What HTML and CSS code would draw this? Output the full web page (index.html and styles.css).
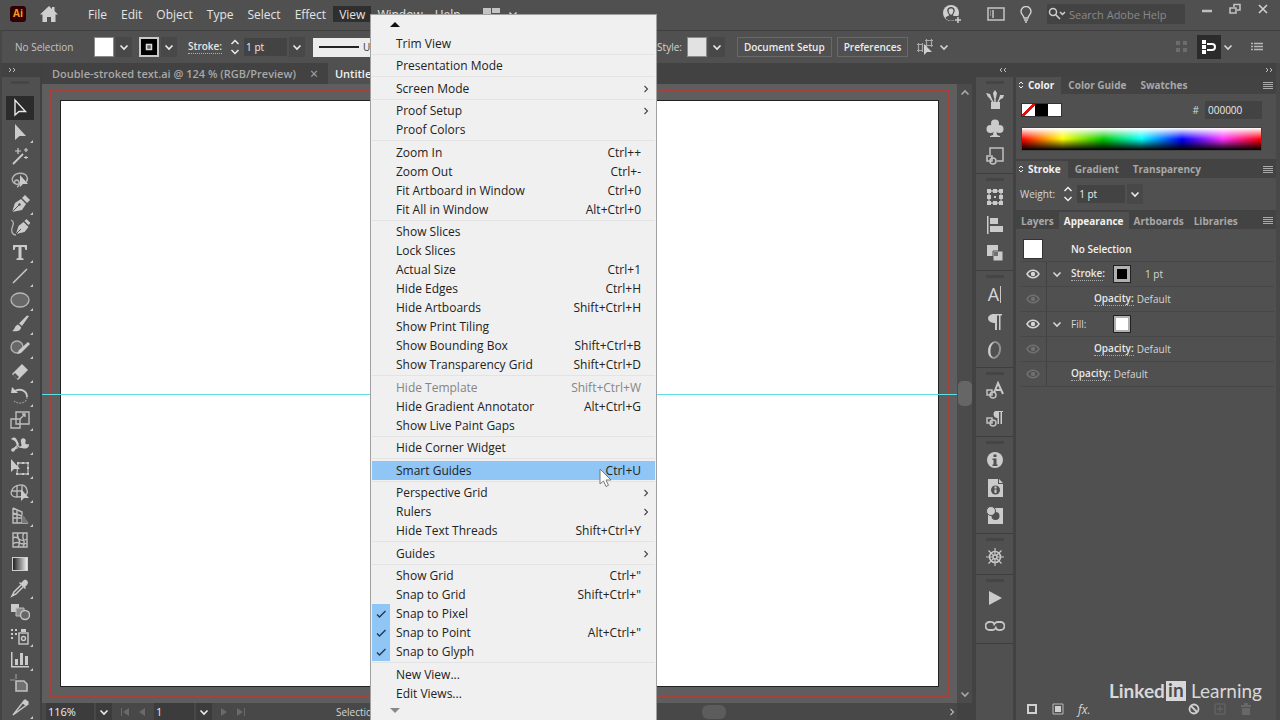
FILE: index.html
```html
<!DOCTYPE html>
<html lang="en">
  <head>
    <meta charset="UTF-8" />
    <meta name="viewport" content="width=device-width, initial-scale=1.0" />
    <title>Adobe Illustrator</title>
    <link rel="stylesheet" href="styles.css">
  </head>
  <body>
    <svg class="defs" aria-hidden="true">
      <symbol id="chevron" viewBox="0 0 10 10"><path d="M1.5 3.5 5 7l3.5-3.5" fill="none" stroke="currentColor" stroke-width="1.6" /></symbol>
      <symbol id="arrow-right" viewBox="0 0 10 10"><path d="M3.5 2 6.500 5 3.500 8" fill="none" stroke="currentColor" stroke-width="1.1" /></symbol>
      <symbol id="stepper" viewBox="0 0 10 16"><path d="M1.500 5 5 1.500 8.500 5M1.500 11 5 14.500 8.500 11" fill="none" stroke="currentColor" stroke-width="1.500" /></symbol>
      <symbol id="sort" viewBox="0 0 6 8"><path d="M1 3 3 1l2 2M1 5l2 2 2-2" fill="none" stroke="currentColor" stroke-width="1" /></symbol>
      <symbol id="lines" viewBox="0 0 10 8"><path d="M0 .5h10M0 2.5h10M0 4.5h10M0 6.5h10" stroke="currentColor" stroke-width="1" /></symbol>
      <symbol id="eye" viewBox="0 0 14 10"><path d="M1 5c3-5 9-5 12 0-3 5-9 5-12 0z" fill="none" stroke="currentColor" stroke-width="1.500" /><circle cx="7" cy="5" r="2.200" fill="currentColor" /></symbol>
      <symbol id="check" viewBox="0 0 12 12"><path d="M2 6.500 4.500 9 10.500 3" fill="none" stroke="currentColor" stroke-width="1.400" /></symbol>
      <symbol id="double" viewBox="0 0 8 6"><path d="M1 1l2 2-2 2M5 1l2 2-2 2" fill="none" stroke="currentColor" stroke-width="1" /></symbol>
    </svg>

    <div class="app">
      <header class="menubar">
        <span class="logo">Ai</span>
        <button class="home" aria-label="Home">
          <svg width="18" height="17" viewBox="0 0 18 17"><path d="M9 0 0 8.500h2.500V16h4.500v-5h4v5h4.500V8.500H18L14.500 5V1h-2.500v2z" fill="#cfcfcf" /></svg>
        </button>
        <nav class="menus">
          <button>File</button>
          <button>Edit</button>
          <button>Object</button>
          <button>Type</button>
          <button>Select</button>
          <button>Effect</button>
          <button class="open">View</button>
          <button>Window</button>
          <button>Help</button>
        </nav>
        <button class="arrange" aria-label="Arrange documents">
          <svg width="17" height="12" viewBox="0 0 17 12"><path d="M0 0h8v12H0zM9 0h8v5H9zM9 6h8v6H9z" fill="#c4c4c4" /></svg>
          <svg width="10" height="10"><use href="#chevron" /></svg>
        </button>
        <div class="menubar-right">
          <button aria-label="Account">
            <svg width="20" height="20" viewBox="0 0 20 20"><circle cx="9" cy="9" r="8" fill="#d0d0d0" /><path d="M9 3c3 0 4.500 2.500 3.500 5l-1.500 3c0 1.500 3 1 3.500 3-3 3.500-8 3.500-11 0C4 12 7 12.500 7 11L5.500 8C4.500 5.500 6 3 9 3z" fill="#505050" /><path d="M9 4.500c2 0 2.800 1.600 2.200 3.400L10 10.500h-2L6.800 7.900C6.200 6.100 7 4.500 9 4.500z" fill="#d0d0d0" /><path d="M12 12h8v8h-8z" fill="#505050" /><path d="M16 13v6M13 16h6" stroke="#d0d0d0" stroke-width="1.500" /></svg>
          </button>
          <button aria-label="Workspace">
            <svg width="18" height="14" viewBox="0 0 18 14"><path d="M1 1h16v12H1zM6 3v8" fill="none" stroke="#c4c4c4" stroke-width="1.500" /><path d="M3 4h1M3 6h1M3 8h1" stroke="#c4c4c4" stroke-width="1.200" /></svg>
          </button>
          <button aria-label="Learn">
            <svg width="12" height="17" viewBox="0 0 12 17"><path d="M4 12c0-2.500-3-3.500-3-6.500a5 5 0 0 1 10 0c0 3-3 4-3 6.500z" fill="none" stroke="#d0d0d0" stroke-width="1.400" /><path d="M4 14h4M5 16h2" stroke="#d0d0d0" stroke-width="1.300" /></svg>
          </button>
          <label class="search">
            <svg width="20" height="14" viewBox="0 0 20 14"><circle cx="6" cy="5" r="3.500" fill="none" stroke="#d0d0d0" stroke-width="1.500" /><path d="M8.500 7.500 13 12M13 5l2.500 2.500L18 5" fill="none" stroke="#d0d0d0" stroke-width="1.500" /></svg>
            <input type="text" placeholder="Search Adobe Help" aria-label="Search Adobe Help">
          </label>
          <div class="window-buttons">
            <button aria-label="Minimize"><svg width="12" height="12" viewBox="0 0 12 12"><path d="M1 8h10" stroke="#c0c0c0" stroke-width="2.500" /></svg></button>
            <button aria-label="Restore"><svg width="12" height="12" viewBox="0 0 12 12"><path d="M5 4V1.500h6V7H8M1 5h6v5H1z" fill="none" stroke="#c0c0c0" stroke-width="1.600" /></svg></button>
            <button aria-label="Close"><svg width="12" height="12" viewBox="0 0 12 12"><path d="M2 2l8 8M10 2l-8 8" stroke="#d0d0d0" stroke-width="1.600" /></svg></button>
          </div>
        </div>
      </header>

      <section class="control-bar">
        <span class="selection-label">No Selection</span>
        <div class="picker">
          <button class="swatch white" aria-label="Fill color"></button>
          <button class="drop" aria-label="Fill options"><svg width="10" height="10"><use href="#chevron" /></svg></button>
        </div>
        <div class="picker">
          <button class="swatch stroke" aria-label="Stroke color"><svg width="16" height="16" viewBox="0 0 16 16"><path d="M0 0h16v16H0z" fill="#000" /><path d="M5.500 5.500h5v5h-5z" fill="#666" stroke="#ddd" stroke-width="1.500" /></svg></button>
          <button class="drop" aria-label="Stroke options"><svg width="10" height="10"><use href="#chevron" /></svg></button>
        </div>
        <label class="stroke-label" for="stroke-weight">Stroke:</label>
        <div class="combo">
          <svg width="10" height="16"><use href="#stepper" /></svg>
          <input id="stroke-weight" type="text" value="1 pt">
          <button class="drop" aria-label="Stroke weight presets"><svg width="10" height="10"><use href="#chevron" /></svg></button>
        </div>
        <button class="profile"><span class="profile-line"></span>Uniform</button>
        <div class="picker style-picker">
          <span>Style:</span>
          <button class="swatch light" aria-label="Graphic style"></button>
          <button class="drop" aria-label="Graphic styles"><svg width="10" height="10"><use href="#chevron" /></svg></button>
        </div>
        <button class="text-button">Document Setup</button>
        <button class="text-button">Preferences</button>
        <button class="select-similar" aria-label="Select similar objects">
          <svg width="16" height="16" viewBox="0 0 16 16"><path d="M8 1.500h8M8 6.500h8M9.500 0v8M14.500 0v8M0 5.500h6M0 11.500h6M1.500 4v9M5.500 4v9" stroke="#a8a8a8" stroke-width="1.200" /><path d="M7 5v11l3-3h5z" fill="#d0d0d0" /></svg>
          <svg width="10" height="10"><use href="#chevron" /></svg>
        </button>
        <div class="control-right">
          <svg width="12" height="12" viewBox="0 0 12 12"><path d="M0 0h4v4H0zM7 0h4v4H7zM0 7h4v4H0zM7 7h4v4H7z" fill="#6c6c6c" /></svg>
          <button class="snap" aria-label="Snap options">
            <svg width="16" height="16" viewBox="0 0 16 16"><path d="M1 1h4v4H1zM1 6h4v4H1zM1 11h4v4H1z" fill="#fff" /><path d="M6 5h5a3 3 0 0 1 0 6H6" fill="none" stroke="#fff" stroke-width="2" /></svg>
          </button>
          <button class="snap-more" aria-label="More snap options"><svg width="10" height="10"><use href="#chevron" /></svg></button>
          <button class="bar-menu" aria-label="Control bar menu">
            <svg width="12" height="10" viewBox="0 0 12 10"><path d="M0 1.500h2M0 4.500h2M0 7.500h2M3 1.500h9M3 4.500h9M3 7.500h9" stroke="#b8b8b8" stroke-width="1.400" /></svg>
          </button>
        </div>
      </section>

      <main class="workspace">
        <aside class="tools">
          <div class="strip"><svg width="8" height="6"><use href="#double" /></svg></div>
          <div class="tools-grip"></div>
          <div class="tool-list">
            <button class="tool active" aria-label="Selection"><svg viewBox="0 0 20 20"><path d="M5 2v15l4-3.500h6.500z" fill="none" stroke="#e8e8e8" stroke-width="1.400" /></svg></button>
            <button class="tool more" aria-label="Direct selection"><svg viewBox="0 0 20 20"><path d="M5 2v16l4.500-4H16z" /></svg></button>
            <button class="tool" aria-label="Magic wand"><svg viewBox="0 0 20 20"><path d="M3 18 13 8" stroke="#cbcbcb" stroke-width="1.800" /><path d="M8 2v6M5 5h6M16 2v4M14 4h4M16 10v3M14 11.500h4" stroke="#cbcbcb" stroke-width="1.200" /></svg></button>
            <button class="tool" aria-label="Lasso"><svg viewBox="0 0 20 20"><path d="M6 14c-3-1-5-4-3-7 3-5 12-5 14 0 1 2 0 4-1 5M7 17c3-1 3-6 0-7-3 0-3 3-1 4 3 1 6-2 6-5" fill="none" stroke="#b5b5b5" stroke-width="1.400" /><path d="M10 5v12l3-3h5z" /></svg></button>
            <button class="tool more" aria-label="Pen"><svg viewBox="0 0 20 20"><path d="M2 18 5 9l6-4 5 5-4 6z" /><path d="M12 4l3-3 5 5-3 3z" /><path d="M2 18l7-7" stroke="#505050" /><circle cx="9.500" cy="10.500" r="1.200" fill="#505050" /></svg></button>
            <button class="tool" aria-label="Curvature"><svg viewBox="0 0 20 20"><path d="M6 16 8.500 8l5-4 5 5-4 5zM14.500 3l2-2 4 4-2 2z" /><path d="M6 16l5-5" stroke="#505050" /><path d="M1 2c4 2 2 5 1 8s0 7 4 7" fill="none" stroke="#b5b5b5" stroke-width="1.300" /></svg></button>
            <button class="tool more" aria-label="Type"><svg viewBox="0 0 20 20"><path d="M3 3h14v5h-1.500l-1-3H11.500v11l2 .500V18h-7v-1.500l2-.500V5H5.500l-1 3H3z" /></svg></button>
            <button class="tool more" aria-label="Line segment"><svg viewBox="0 0 20 20"><path d="M3 17 17 3" stroke="#cbcbcb" stroke-width="1.400" /></svg></button>
            <button class="tool more" aria-label="Ellipse"><svg viewBox="0 0 20 20"><ellipse cx="10" cy="10" rx="9" ry="7" fill="#686868" stroke="#b8b8b8" stroke-width="1.300" /></svg></button>
            <button class="tool more" aria-label="Paintbrush"><svg viewBox="0 0 20 20"><path d="M19 2 12 12l-3-2.500 8-8zM8 10.500l3 2.500c0 4-4 5-9 4 3-1 2-5 6-6.500z" /></svg></button>
            <button class="tool more" aria-label="Shaper"><svg viewBox="0 0 20 20"><circle cx="7" cy="9" r="6" fill="#686868" stroke="#b0b0b0" stroke-width="1.400" /><path d="M7 16 9 12l9-8 2 2-9 9z" /></svg></button>
            <button class="tool more" aria-label="Eraser"><svg viewBox="0 0 20 20"><path d="M12 2l6 6-10 10-6-6z" /><path d="M5 11l4 4-2 2-4-4z" fill="#505050" /></svg></button>
            <button class="tool more" aria-label="Rotate"><svg viewBox="0 0 20 20"><path d="M5 5c6-3 12 0 12 6" fill="none" stroke="#c8c8c8" stroke-width="1.800" /><path d="M17 11c0 6-8 8-13 4" fill="none" stroke="#909090" stroke-width="1.300" stroke-dasharray="2 1" /><path d="M2 1l6 6H1z" /></svg></button>
            <button class="tool more" aria-label="Scale"><svg viewBox="0 0 20 20"><path d="M6 2h13v12H6zM1 9h9v9H1zM10 9l5-5M12 4h3v3" fill="none" stroke="#bdbdbd" stroke-width="1.400" /></svg></button>
            <button class="tool more" aria-label="Width"><svg viewBox="0 0 20 20"><path d="M1 5c4-3 5-1 7 3 2 5 4 5 3 0-1-3 2-5 4-3s-1 4 1 5 3 0 3 0c0 5-4 5-7 4-3 0-5-1-6-5C5 6 4 7 1 5z" /><path d="M2 16c3 1 3-3 6-2M2 16l6-5" fill="none" stroke="#c8c8c8" stroke-width="1.300" /><circle cx="3" cy="16" r="1.800" /><circle cx="10" cy="11" r="1.500" fill="#505050" /></svg></button>
            <button class="tool more" aria-label="Free transform"><svg viewBox="0 0 20 20"><path d="M8 5h10v11H7z" fill="none" stroke="#b8b8b8" stroke-width="1.300" /><path d="M7 4h2v2H7zM12 4h2v2h-2zM17 4h2v2h-2zM17 9h2v2h-2zM17 15h2v2h-2zM12 15h2v2h-2zM6 15h2v2H6zM1 1v13l3-3h6z" /></svg></button>
            <button class="tool more" aria-label="Shape builder"><svg viewBox="0 0 20 20"><path d="M6 15C2 15 0 12 2 8c2-5 13-8 15 0 2 6-5 7-11 7zM2 9h10M7 4v11M12 4v6" fill="none" stroke="#b8b8b8" stroke-width="1.400" /><path d="M11 7v12l3-3h5z" /></svg></button>
            <button class="tool more" aria-label="Perspective grid"><svg viewBox="0 0 20 20"><path d="M3 2v15h15M3 2l9 4v11M3 7l9 3M3 12h12M7 4v13" fill="none" stroke="#bdbdbd" stroke-width="1.400" /><path d="M12 8l7 9h-7z" fill="#777" /></svg></button>
            <button class="tool" aria-label="Mesh"><svg viewBox="0 0 20 20"><path d="M3 3h14v14H3zM3 8c5-4 6 6 14 1M3 14c5-5 8 3 14-1M8 3c-3 5 5 7 0 14M14 3c-4 5 3 8-1 14" fill="none" stroke="#bdbdbd" stroke-width="1.400" /></svg></button>
            <button class="tool" aria-label="Gradient"><span class="gradient-icon"></span></button>
            <button class="tool more" aria-label="Eyedropper"><svg viewBox="0 0 20 20"><path d="M13 3c2-3 7 0 4 4l-2 2 1 1-1 1-6-6 1-1 1 1z" /><path d="M11 7 4 14l-2 4 4-2 7-7" fill="none" stroke="#cbcbcb" stroke-width="1.500" /></svg></button>
            <button class="tool" aria-label="Blend"><svg viewBox="0 0 20 20"><path d="M1 2h8v8H1z" /><path d="M6 6h8v8H6z" fill="#8a8a8a" stroke="#bdbdbd" /><circle cx="15" cy="13" r="4.500" fill="#666" stroke="#c5c5c5" stroke-width="1.400" /></svg></button>
            <button class="tool more" aria-label="Symbol sprayer"><svg viewBox="0 0 20 20"><path d="M9 7h9v11H9z" fill="none" stroke="#bdbdbd" stroke-width="1.600" /><circle cx="13.500" cy="12.500" r="2" fill="none" stroke="#cbcbcb" stroke-width="1.400" /><path d="M11 3h5v3h-5zM1 3h2v2H1zM5 3h2v2H5zM1 7h2v2H1zM5 7h2v2H5zM1 11h2v2H1z" /></svg></button>
            <button class="tool more" aria-label="Column graph"><svg viewBox="0 0 20 20"><path d="M1 2h1.500v14H19v1.500H1zM5 9h3v6H5zM10 3h3v12h-3zM15 6h3v9h-3z" /></svg></button>
            <button class="tool" aria-label="Artboard"><svg viewBox="0 0 20 20"><path d="M6 0v5M0 6h5" stroke="#999" stroke-width="1.200" /><path d="M6 7h8l3 3v7H6z" fill="#707070" stroke="#c0c0c0" stroke-width="1.600" /></svg></button>
            <button class="tool more" aria-label="Slice"><svg viewBox="0 0 20 20"><path d="M3 17 14 3l4 3z" fill="none" stroke="#c5c5c5" stroke-width="1.500" /><path d="M12 5l3-4 4 3-3 4z" /></svg></button>
          </div>
        </aside>

        <section class="document">
          <div class="tabs">
            <button class="tab">Double-stroked text.ai @ 124 % (RGB/Preview)<span class="close">×</span></button>
            <button class="tab active">Untitled</button>
          </div>
          <div class="view">
            <div class="canvas">
              <div class="bleed"><div class="artboard"></div></div>
              <div class="guide"></div>
            </div>
            <div class="scroll-y">
              <svg width="10" height="10" class="flip"><use href="#chevron" /></svg>
              <span class="thumb-y"></span>
              <svg width="10" height="10"><use href="#chevron" /></svg>
            </div>
          </div>
          <div class="status">
            <div class="combo zoom">
              <input type="text" value="116%" aria-label="Zoom level">
              <button class="drop" aria-label="Zoom presets"><svg width="10" height="10"><use href="#chevron" /></svg></button>
            </div>
            <svg class="nav" width="26" height="10" viewBox="0 0 26 10"><path d="M1 1h1v8H1zM9 1v8L3 5zM25 1v8l-6-4z" fill="#6a6a6a" /></svg>
            <div class="combo page">
              <input type="text" value="1" aria-label="Artboard number">
              <button class="drop" aria-label="Artboards"><svg width="10" height="10"><use href="#chevron" /></svg></button>
            </div>
            <svg class="nav" width="26" height="10" viewBox="0 0 26 10"><path d="M1 1v8l6-4zM17 1v8l6-4zM24 1h1v8h-1z" fill="#6a6a6a" /></svg>
            <span class="tool-name">Selection</span>
            <div class="scroll-x">
              <span class="thumb-x"></span>
              <svg width="10" height="10"><use href="#arrow-right" /></svg>
            </div>
          </div>
        </section>

        <aside class="dock">
          <div class="strip"><svg width="8" height="6" class="flip"><use href="#double" /></svg></div>
          <div class="dock-group">
            <button aria-label="Brushes"><svg viewBox="0 0 20 20"><path d="M6 12h9v7H6z" /><path d="M10 12V5M8 12 4 6M13 12l3-6" stroke="#c8c8c8" stroke-width="1.500" /><path d="M10 0l2 3-1 5H9L8 3zM1 3l4 1 2 5-4-2zM15 5h4l-1 3-4 2z" /></svg></button>
            <button aria-label="Symbols"><svg viewBox="0 0 20 20"><circle cx="10" cy="5.500" r="4" /><circle cx="5.500" cy="11" r="4" /><circle cx="14.500" cy="11" r="4" /><path d="M9 9h2l1 8 3 1v1H5v-1l3-1z" /></svg></button>
            <button aria-label="Graphic styles"><svg viewBox="0 0 20 20"><path d="M5 9V2h13v13h-6" fill="none" stroke="#c0c0c0" stroke-width="1.500" /><path d="M2 10h5v5H2z" fill="none" stroke="#c0c0c0" stroke-width="1.600" /><circle cx="8" cy="15" r="3" fill="none" stroke="#c0c0c0" stroke-width="1.600" /></svg></button>
          </div>
          <div class="dock-group">
            <button aria-label="Transform"><svg viewBox="0 0 20 20"><path d="M4 4h12v12H4z" fill="none" stroke="#bdbdbd" stroke-width="1.300" /><path d="M2 2h4v4H2zM8 2h4v4H8zM14 2h4v4h-4zM2 8h4v4H2zM14 8h4v4h-4zM2 14h4v4H2zM8 14h4v4H8zM14 14h4v4h-4zM9 9h2v2H9z" /></svg></button>
            <button aria-label="Align"><svg viewBox="0 0 20 20"><path d="M2 1h1.500v18H2zM5 3h8v6H5zM5 11h13v6H5z" /></svg></button>
            <button aria-label="Pathfinder"><svg viewBox="0 0 20 20"><path d="M2 2h11v11H2z" /><path d="M8 8h10v10H8z" stroke="#505050" /><path d="M9 9h4v4H9z" fill="#707070" /></svg></button>
          </div>
          <div class="dock-group">
            <button aria-label="Character" class="glyph">A<span class="caret"></span></button>
            <button aria-label="Paragraph"><svg viewBox="0 0 20 20"><path d="M9 2h8v1.500h-1.500V18H14V3.500h-2V18h-2v-7C1 11 1 2 9 2z" /></svg></button>
            <button aria-label="OpenType"><svg viewBox="0 0 20 20"><ellipse cx="9.500" cy="10" rx="5.500" ry="8" transform="rotate(12 9.500 10)" fill="none" stroke="#909090" stroke-width="2" /><path d="M9 2C2 3 1 17 8 18c-4-3-3-13 1-16z" /></svg></button>
          </div>
          <div class="dock-group">
            <button aria-label="Character styles"><svg viewBox="0 0 20 20"><path d="M2 9h5v5H2z" fill="none" stroke="#c0c0c0" stroke-width="1.500" /><circle cx="8" cy="14" r="3" fill="none" stroke="#c0c0c0" stroke-width="1.500" /><path d="m9 12 4-10 5 11M11 9h5" fill="none" stroke="#c8c8c8" stroke-width="2" /></svg></button>
            <button aria-label="Paragraph styles"><svg viewBox="0 0 20 20"><path d="M2 9h5v5H2z" fill="none" stroke="#c0c0c0" stroke-width="1.500" /><circle cx="8" cy="14" r="3" fill="none" stroke="#c0c0c0" stroke-width="1.500" /><path d="M11 2h7v1h-1v12h-1.500V3h-1.500v12h-1.500V9c-5 0-5-7-1.500-7z" /></svg></button>
          </div>
          <div class="dock-group">
            <button aria-label="Info"><svg viewBox="0 0 20 20"><circle cx="10" cy="10" r="8" /><path d="M8.500 4.500h3v2.500h-3zM7.500 8.500h4v6h1V16h-5v-1.500h1V10h-1z" fill="#505050" /></svg></button>
            <button aria-label="Document info"><svg viewBox="0 0 20 20"><path d="M3 1h10v5h5v13H3z" /><path d="M14 1l4 4h-4z" /><circle cx="10.500" cy="12" r="4.500" fill="#505050" /><path d="M9.500 8.500h2v2h-2zM9.500 11.500h2V15h-2z" /></svg></button>
            <button aria-label="Attributes"><svg viewBox="0 0 20 20"><path d="M10 2h8v16H3V9z" /><circle cx="10.500" cy="10" r="4" fill="#505050" /><circle cx="6" cy="5" r="4.500" stroke="#505050" /></svg></button>
          </div>
          <div class="dock-group">
            <button aria-label="Navigator"><svg viewBox="0 0 20 20"><circle cx="10" cy="10" r="5.500" fill="none" stroke="#c8c8c8" stroke-width="1.600" /><circle cx="10" cy="10" r="2" fill="none" stroke="#c8c8c8" stroke-width="1.500" /><path d="M10 1v7M10 12v7M1 10h7M12 10h7M3.500 3.500l5 5M11.500 11.500l5 5M16.500 3.500l-5 5M8.500 11.500l-5 5" stroke="#c8c8c8" stroke-width="1.200" /></svg></button>
          </div>
          <div class="dock-group">
            <button aria-label="Actions"><svg viewBox="0 0 20 20"><path d="M4 3v14l13-7z" /></svg></button>
            <button aria-label="Links"><svg viewBox="0 0 20 20"><path d="M9 7.500C8 5.500 6 6 4.500 6a4 4 0 0 0 0 8H7c2 0 4-1.500 4-3.500M11 12.500c1 2 3 1.500 4.500 1.500a4 4 0 0 0 0-8H13c-2 0-4 1.500-4 3.500" fill="none" stroke="#c8c8c8" stroke-width="1.800" /></svg></button>
          </div>
          <div class="dock-rest"></div>
        </aside>

        <aside class="panels">
          <div class="strip"><svg width="8" height="6"><use href="#double" /></svg></div>

          <div class="panel-tabs">
            <button class="active"><svg width="6" height="8"><use href="#sort" /></svg>Color</button>
            <button>Color Guide</button>
            <button>Swatches</button>
            <svg class="flyout" width="10" height="8"><use href="#lines" /></svg>
          </div>
          <div class="panel color-panel">
            <div class="color-row">
              <div class="chips"><span class="none"></span><span class="black"></span><span class="chip-white"></span></div>
              <label for="hex">#</label>
              <input id="hex" type="text" value="000000">
            </div>
            <div class="spectrum"></div>
          </div>

          <div class="panel-tabs">
            <button class="active"><svg width="6" height="8"><use href="#sort" /></svg>Stroke</button>
            <button>Gradient</button>
            <button>Transparency</button>
            <svg class="flyout" width="10" height="8"><use href="#lines" /></svg>
          </div>
          <div class="panel stroke-panel">
            <label for="weight">Weight:</label>
            <div class="combo">
              <svg width="10" height="16"><use href="#stepper" /></svg>
              <input id="weight" type="text" value="1 pt">
              <button class="drop" aria-label="Weight presets"><svg width="10" height="10"><use href="#chevron" /></svg></button>
            </div>
          </div>

          <div class="panel-tabs compact">
            <button>Layers</button>
            <button class="active">Appearance</button>
            <button>Artboards</button>
            <button>Libraries</button>
            <svg class="flyout" width="10" height="8"><use href="#lines" /></svg>
          </div>
          <div class="panel appearance">
            <ul class="attributes">
              <li class="title-row"><span class="thumb"></span><b>No Selection</b></li>
              <li><span class="eye"><svg width="14" height="10"><use href="#eye" /></svg></span><svg class="expand" width="10" height="10"><use href="#chevron" /></svg><a href="#">Stroke:</a><span class="mini dark"></span><span>1 pt</span></li>
              <li class="nested"><span class="eye off"><svg width="14" height="10"><use href="#eye" /></svg></span><a href="#">Opacity:</a><span>Default</span></li>
              <li><span class="eye"><svg width="14" height="10"><use href="#eye" /></svg></span><svg class="expand" width="10" height="10"><use href="#chevron" /></svg><span class="name">Fill:</span><span class="mini"></span></li>
              <li class="nested"><span class="eye off"><svg width="14" height="10"><use href="#eye" /></svg></span><a href="#">Opacity:</a><span>Default</span></li>
              <li class="nested top"><span class="eye off"><svg width="14" height="10"><use href="#eye" /></svg></span><a href="#">Opacity:</a><span>Default</span></li>
            </ul>
            <div class="panel-footer">
              <button aria-label="Add new stroke"><svg width="12" height="12" viewBox="0 0 12 12"><path d="M2 2h8v8H2z" fill="none" stroke="#d0d0d0" stroke-width="2" /></svg></button>
              <button aria-label="Add new fill"><svg width="12" height="12" viewBox="0 0 12 12"><path d="M1 1h10v10H1z" fill="none" stroke="#b8b8b8" /><path d="M3 3h6v6H3z" fill="#d0d0d0" /></svg></button>
              <button class="fx" aria-label="Add new effect">fx.</button>
              <button class="clear" aria-label="Clear appearance"><svg width="12" height="12" viewBox="0 0 12 12"><circle cx="6" cy="6" r="4.500" fill="none" stroke="#d0d0d0" stroke-width="1.800" /><path d="M3 3l6 6" stroke="#d0d0d0" stroke-width="1.800" /></svg></button>
              <button aria-label="Duplicate item" disabled><svg width="12" height="12" viewBox="0 0 12 12"><path d="M1 1h10v10H1zM6 3v6M3 6h6" fill="none" stroke="#686868" /></svg></button>
              <button aria-label="Delete item" disabled><svg width="12" height="12" viewBox="0 0 12 12"><path d="M1 2h10v2H1zM2 5h8v7H2zM4 0h4v2H4z" fill="#686868" /></svg></button>
            </div>
          </div>
        </aside>
      </main>

      <div class="view-menu" role="menu">
        <span class="scroll-up"></span>
        <ul>
          <li><button role="menuitem">Trim View</button></li>
        </ul>
        <ul>
          <li><button role="menuitem">Presentation Mode</button></li>
        </ul>
        <ul>
          <li><button role="menuitem">Screen Mode<svg width="10" height="10"><use href="#arrow-right" /></svg></button></li>
        </ul>
        <ul>
          <li><button role="menuitem">Proof Setup<svg width="10" height="10"><use href="#arrow-right" /></svg></button></li>
          <li><button role="menuitem">Proof Colors</button></li>
        </ul>
        <ul>
          <li><button role="menuitem">Zoom In<kbd>Ctrl++</kbd></button></li>
          <li><button role="menuitem">Zoom Out<kbd>Ctrl+-</kbd></button></li>
          <li><button role="menuitem">Fit Artboard in Window<kbd>Ctrl+0</kbd></button></li>
          <li><button role="menuitem">Fit All in Window<kbd>Alt+Ctrl+0</kbd></button></li>
        </ul>
        <ul>
          <li><button role="menuitem">Show Slices</button></li>
          <li><button role="menuitem">Lock Slices</button></li>
          <li><button role="menuitem">Actual Size<kbd>Ctrl+1</kbd></button></li>
          <li><button role="menuitem">Hide Edges<kbd>Ctrl+H</kbd></button></li>
          <li><button role="menuitem">Hide Artboards<kbd>Shift+Ctrl+H</kbd></button></li>
          <li><button role="menuitem">Show Print Tiling</button></li>
          <li><button role="menuitem">Show Bounding Box<kbd>Shift+Ctrl+B</kbd></button></li>
          <li><button role="menuitem">Show Transparency Grid<kbd>Shift+Ctrl+D</kbd></button></li>
        </ul>
        <ul>
          <li><button role="menuitem" disabled>Hide Template<kbd>Shift+Ctrl+W</kbd></button></li>
          <li><button role="menuitem">Hide Gradient Annotator<kbd>Alt+Ctrl+G</kbd></button></li>
          <li><button role="menuitem">Show Live Paint Gaps</button></li>
        </ul>
        <ul>
          <li><button role="menuitem">Hide Corner Widget</button></li>
        </ul>
        <ul>
          <li><button role="menuitem" class="hover">Smart Guides<kbd>Ctrl+U</kbd></button></li>
        </ul>
        <ul>
          <li><button role="menuitem">Perspective Grid<svg width="10" height="10"><use href="#arrow-right" /></svg></button></li>
          <li><button role="menuitem">Rulers<svg width="10" height="10"><use href="#arrow-right" /></svg></button></li>
          <li><button role="menuitem">Hide Text Threads<kbd>Shift+Ctrl+Y</kbd></button></li>
        </ul>
        <ul>
          <li><button role="menuitem">Guides<svg width="10" height="10"><use href="#arrow-right" /></svg></button></li>
        </ul>
        <ul>
          <li><button role="menuitem">Show Grid<kbd>Ctrl+"</kbd></button></li>
          <li><button role="menuitem">Snap to Grid<kbd>Shift+Ctrl+"</kbd></button></li>
          <li class="checked"><span class="tick"><svg width="12" height="12"><use href="#check" /></svg></span><button role="menuitem">Snap to Pixel</button></li>
          <li class="checked"><span class="tick"><svg width="12" height="12"><use href="#check" /></svg></span><button role="menuitem">Snap to Point<kbd>Alt+Ctrl+"</kbd></button></li>
          <li class="checked"><span class="tick"><svg width="12" height="12"><use href="#check" /></svg></span><button role="menuitem">Snap to Glyph</button></li>
        </ul>
        <ul>
          <li><button role="menuitem">New View...</button></li>
          <li><button role="menuitem">Edit Views...</button></li>
        </ul>
        <span class="scroll-down"></span>
      </div>

      <svg class="cursor" width="14" height="20" viewBox="0 0 14 20"><path d="M1 1v15l3.500-3 2.500 5.500 2.500-1.200L7 12h5z" fill="#fff" stroke="#777" /></svg>

      <div class="watermark"><b>Linked</b><span class="in">in</span><span>Learning</span></div>
    </div>
  </body>
</html>
```
FILE: styles.css
```css
* {
  box-sizing: border-box;
}

body {
  margin: 0;
  font-family: "Open Sans", "Noto Sans", sans-serif;
  font-size: 11px;
  color: #d6d6d6;
  background: #505050;
}

button, input {
  font: inherit;
  color: inherit;
  background: none;
  border: none;
  padding: 0;
  margin: 0;
}

button {
  display: flex;
  align-items: center;
  white-space: nowrap;
}

input {
  min-width: 0;
}

ul {
  list-style: none;
  margin: 0;
  padding: 0;
}

a {
  color: inherit;
}

svg {
  display: block;
  flex: none;
}

.defs {
  position: absolute;
  width: 0;
  height: 0;
}

.flip {
  transform: rotate(180deg);
}

.app {
  position: relative;
  display: flex;
  flex-direction: column;
  height: 100vh;
  overflow: hidden;
}

/* menu bar */
.menubar {
  display: flex;
  align-items: center;
  height: 30px;
  flex: none;
  padding: 0 3px 2px 10px;
}

.logo {
  width: 16px;
  height: 16px;
  line-height: 15px;
  text-align: center;
  font-weight: bold;
  font-size: 10px;
  color: #f79a1c;
  background: #330000;
  border-radius: 3px;
}

.home {
  margin-left: 14px;
  padding-right: 23px;
}

.menus {
  display: flex;
  font-size: 12px;
  color: #e4e4e4;
}

.menus button {
  height: 16px;
  padding: 0 7px;
}

.menus .open {
  background: #2f2f2f;
}

.menus .open, .menus .open ~ button {
  padding: 0 6px;
}

.arrange {
  gap: 8px;
  margin-left: 16px;
}

.menubar-right {
  display: flex;
  align-items: center;
  align-self: stretch;
  margin-left: auto;
}

.menubar-right > button {
  margin-right: 15px;
}

.menubar-right > button:first-child {
  margin-right: 25px;
}

.search {
  display: flex;
  align-items: center;
  gap: 2px;
  width: 138px;
  height: 20px;
  background: #434343;
}

.search input {
  flex: 1;
}

.search input::placeholder {
  color: #8a8a8a;
}

.window-buttons {
  display: flex;
  align-items: center;
  align-self: flex-start;
  height: 18px;
  margin-left: 8px;
}

.window-buttons button {
  width: 28px;
  justify-content: center;
}

/* control bar */
.control-bar {
  display: flex;
  align-items: center;
  height: 33px;
  flex: none;
  padding-left: 13px;
  border-top: 1px solid #3e3e3e;
  border-left: 2px solid #474747;
  font-size: 10px;
}

.selection-label {
  width: 79px;
  color: #c4c4c4;
}

.picker {
  display: flex;
  align-items: center;
  gap: 2px;
  margin-right: 7px;
}

.swatch {
  width: 20px;
  height: 20px;
  border: 1px solid #8a8a8a;
}

.swatch.white {
  background: #fff;
}

.swatch.light {
  background: #e2e2e2;
}

.swatch.stroke {
  border: 2px solid #c8c8c8;
}

.drop {
  justify-content: center;
  width: 16px;
  height: 20px;
  background: #484848;
  color: #ececec;
}

.stroke-label {
  margin: 0 8px 0 4px;
  font-weight: 600;
  color: #e6e6e6;
  border-bottom: 1px dotted #b0b0b0;
  line-height: 13px;
}

.combo {
  display: flex;
  align-items: center;
  gap: 2px;
  color: #ececec;
}

.combo > svg {
  margin-right: 2px;
}

.combo input {
  width: 43px;
  height: 18px;
  padding-left: 2px;
  background: #434343;
}

.profile {
  gap: 4px;
  width: 332px;
  height: 19px;
  margin-left: 8px;
  padding-left: 6px;
  background: #ececec;
  color: #333;
}

.profile-line {
  width: 40px;
  border-top: 2px solid #222;
}

.style-picker {
  margin: 0 12px;
}

.style-picker > span {
  margin-right: 3px;
}

.text-button {
  height: 20px;
  padding: 0 6px;
  margin-right: 5px;
  border: 1px solid #686868;
  font-weight: 600;
  color: #ececec;
}

.select-similar {
  gap: 6px;
  margin-left: 4px;
}

.control-right {
  display: flex;
  align-items: center;
  margin-left: auto;
  padding-right: 17px;
}

.snap {
  justify-content: center;
  width: 24px;
  height: 24px;
  margin-left: 9px;
  background: #2b2b2b;
}

.snap-more {
  margin: 0 18px 0 2px;
}

/* workspace */
.workspace {
  display: flex;
  flex: 1;
  min-height: 0;
  background: #424242;
}

.strip {
  display: flex;
  align-items: center;
  height: 14px;
  flex: none;
  padding: 0 6px;
  background: #424242;
  color: #bdbdbd;
}

.tools {
  width: 42px;
  flex: none;
  display: flex;
  flex-direction: column;
  border-right: 2px solid #414141;
  border-left: 2px solid #444;
  background: #505050;
}

.tools-grip {
  width: 18px;
  height: 3px;
  flex: none;
  margin: 4px 0 12px 9px;
  background: #464646;
}

.tool-list {
  padding-left: 4px;
}

.tool {
  position: relative;
  justify-content: center;
  width: 28px;
  height: 24px;
}

.tool.active {
  background: #2b2b2b;
}

.tool svg, .dock-group svg {
  width: 20px;
  height: 20px;
  fill: #cbcbcb;
}

.tool.more::after {
  content: "";
  position: absolute;
  right: 1px;
  bottom: 1px;
  border-left: 3px solid transparent;
  border-bottom: 3px solid #c8c8c8;
}

.gradient-icon {
  width: 16px;
  height: 14px;
  border: 1px solid #d0d0d0;
  background: linear-gradient(90deg, #222, #eee);
}

.document {
  display: flex;
  flex-direction: column;
  flex: 1;
  min-width: 0;
}

.tabs {
  display: flex;
  height: 21px;
  flex: none;
  overflow: hidden;
}

.tab {
  padding-left: 10px;
  font-size: 11px;
  font-weight: 600;
  color: #a8a8a8;
}

.tab.active {
  width: 240px;
  padding-left: 7px;
  background: #505050;
  color: #f0f0f0;
}

.close {
  width: 28px;
  margin-left: 4px;
  text-align: center;
  font-size: 14px;
  font-weight: normal;
}

.view {
  display: flex;
  flex: 1;
  min-height: 0;
}

.canvas {
  position: relative;
  display: flex;
  flex: 1;
  padding: 6px 7px;
  background: #5e5e5e;
}

.bleed {
  display: flex;
  flex: 1;
  padding: 8px 9px;
  border: 2px solid #a8413b;
}

.artboard {
  flex: 1;
  background: #fff;
  border: 1px solid #222;
}

.guide {
  position: absolute;
  left: 0;
  right: 0;
  top: 50%;
  border-top: 1px solid #5fdde3;
}

.scroll-y {
  display: flex;
  flex-direction: column;
  align-items: center;
  justify-content: space-between;
  width: 15px;
  margin-right: 4px;
  padding: 4px 0;
  background: #4b4b4b;
  color: #aaa;
}

.thumb-y {
  width: 14px;
  height: 25px;
  border-radius: 5px;
  background: #666;
}

.status {
  display: flex;
  align-items: center;
  height: 17px;
  flex: none;
  padding-left: 4px;
  margin-right: 19px;
  font-size: 11px;
  background: #484848;
}

.status .combo input {
  height: 17px;
  background: #3c3c3c;
}

.zoom input {
  width: 48px;
}

.status .drop {
  height: 17px;
  background: #3c3c3c;
}

.page input {
  width: 40px;
}

.nav {
  margin: 0 8px;
}

.tool-name {
  width: 280px;
  margin-left: 82px;
  font-size: 10px;
}

.scroll-x {
  display: flex;
  align-items: center;
  justify-content: space-between;
  flex: 1;
  color: #bbb;
}

.thumb-x {
  width: 24px;
  height: 14px;
  margin-left: 86px;
  border-radius: 6px;
  background: #5c5c5c;
}

/* icon dock */
.dock {
  display: flex;
  flex-direction: column;
  width: 37px;
  flex: none;
  margin-right: 3px;
}

.dock .strip {
  justify-content: flex-end;
}

.dock-group {
  padding: 4px 0 3px;
  border-bottom: 1px solid #3e3e3e;
  background: #505050;
}

.dock-group::before {
  content: "";
  display: block;
  width: 18px;
  height: 3px;
  margin: 0 auto 2px;
  background: #454545;
}

.dock-group button {
  width: 37px;
  height: 28px;
  justify-content: center;
}

.glyph {
  gap: 1px;
  font-size: 18px;
}

.caret {
  height: 17px;
  border-left: 1px solid #c8c8c8;
}

.dock-rest {
  flex: 1;
  background: #505050;
}

/* panels */
.panels {
  display: flex;
  flex-direction: column;
  width: 264px;
  flex: none;
  border-right: 4px solid #484848;
}

.panels .strip {
  justify-content: flex-end;
  padding-right: 3px;
}

.panel-tabs {
  display: flex;
  align-items: center;
  height: 17px;
  flex: none;
  padding-right: 3px;
  background: #434343;
}

.panel-tabs button {
  align-self: stretch;
  gap: 4px;
  padding: 0 7px 1px;
  font-size: 10px;
  font-weight: bold;
  color: #a8a8a8;
}

.panel-tabs .active {
  background: #505050;
  color: #f0f0f0;
}

.panel-tabs .active:first-child {
  padding-left: 2px;
}

.panel-tabs.compact button {
  padding: 0 5px;
}

.flyout {
  margin-left: auto;
  color: #aaa;
}

.panel {
  background: #505050;
}

.color-panel {
  padding: 7px 14px 8px 5px;
  margin-bottom: 2px;
}

.color-row {
  display: flex;
  align-items: center;
  gap: 6px;
  height: 18px;
  margin-bottom: 8px;
  font-size: 10px;
}

.chips {
  display: flex;
  margin-right: auto;
  border: 1px solid #333;
}

.chips span {
  width: 13px;
  height: 12px;
}

.none {
  background: linear-gradient(135deg, #fff 42%, #e01010 42%, #e01010 58%, #fff 58%);
}

.black {
  background: #000;
}

.chip-white {
  background: #fff;
}

.color-row input {
  width: 57px;
  height: 18px;
  padding-left: 3px;
  background: #434343;
  color: #ececec;
}

.spectrum {
  height: 24px;
  border: 1px solid #444;
  background:
    linear-gradient(#fff, transparent 50%, #000),
    linear-gradient(90deg, #f00, #ff0 17%, #0c0 34%, #0ff 50%, #00f 67%, #f3f 84%, #f00);
}

.stroke-panel {
  display: flex;
  align-items: center;
  gap: 8px;
  height: 32px;
  padding-left: 4px;
  margin-bottom: 2px;
  font-size: 10px;
}

.stroke-panel .combo input {
  width: 48px;
}

.appearance {
  display: flex;
  flex-direction: column;
  flex: 1;
  padding: 8px 2px 0 5px;
}

.attributes {
  flex: 1;
  font-size: 10px;
}

.attributes li {
  display: flex;
  align-items: center;
  height: 25px;
  border-bottom: 1px solid #474747;
}

.title-row b {
  font-weight: 600;
  color: #f0f0f0;
}

.thumb {
  width: 20px;
  height: 20px;
  margin: 0 28px 0 2px;
  border: 1px solid #333;
  background: #fff;
}

.eye {
  display: flex;
  align-items: center;
  justify-content: center;
  align-self: stretch;
  width: 26px;
  padding-right: 2px;
  border-right: 1px solid #424242;
}

.eye.off {
  color: #707070;
}

.expand {
  margin: 0 9px 0 5px;
}

.attributes a {
  font-weight: 600;
  color: #e8e8e8;
  text-decoration: none;
  border-bottom: 1px dotted #aaa;
  line-height: 13px;
}

.attributes a, .name {
  margin-right: 3px;
}

.expand + a, .name {
  width: 32px;
}

.expand + a, .expand + .name {
  margin-right: 10px;
}

.nested a {
  margin-left: 47px;
}

.nested.top a {
  margin-left: 24px;
}

.mini {
  width: 18px;
  height: 18px;
  margin-right: 14px;
  border: 1px solid #222;
  background: #fff;
  box-shadow: inset 0 0 0 2px #b0b0b0;
}

.mini.dark {
  background: #000;
  box-shadow: inset 0 0 0 3px #b0b0b0;
}

.panel-footer {
  display: flex;
  align-items: center;
  gap: 14px;
  height: 22px;
  padding: 0 22px 0 5px;
}

.fx {
  font-size: 12px;
  font-style: italic;
}

.clear {
  margin-left: auto;
}

/* View menu, drawn over the document */
.view-menu {
  position: absolute;
  left: 370px;
  top: 14px;
  bottom: 0;
  width: 287px;
  padding: 7px 1px 0;
  border: 1px solid #a0a0a0;
  border-bottom: none;
  background: #f0f0f0;
  color: #222;
  font-size: 12px;
}

.view-menu li {
  position: relative;
}

.view-menu li button {
  width: 100%;
  height: 19px;
  padding: 0 14px 0 24px;
}

.view-menu ul + ul {
  border-top: 1px solid #e3e3e3;
  margin-top: 1px;
  padding-top: 1px;
}

.view-menu ul:nth-of-type(odd) {
  padding-top: 2px;
}

.view-menu ul:first-of-type {
  padding-top: 0;
}

.view-menu kbd {
  margin-left: auto;
  font-family: inherit;
}

.view-menu li svg {
  margin: 0 -10px 0 auto;
  color: #444;
}

.view-menu li button:disabled {
  color: #858585;
}

.view-menu .hover {
  background: #8fc6f5;
}

.tick {
  position: absolute;
  left: 0;
  top: 0;
  display: flex;
  align-items: center;
  justify-content: center;
  width: 18px;
  height: 19px;
  background: #8fc6f5;
}

.view-menu .tick svg {
  margin: 0;
  color: #1c3a55;
}

.scroll-up, .scroll-down {
  display: block;
  width: 0;
  margin-left: 18px;
  border: 5px solid transparent;
  border-top: none;
  border-bottom-color: #111;
  margin-bottom: 7px;
}

.scroll-down {
  margin-top: 5px;
  border-top: 5px solid #888;
  border-bottom: none;
}

.cursor {
  position: absolute;
  left: 599px;
  top: 468px;
}

.watermark {
  position: absolute;
  right: 18px;
  bottom: 18px;
  display: flex;
  align-items: center;
  font-family: Lato, sans-serif;
  font-size: 19px;
  line-height: 22px;
  color: #d8d8d8;
}

.watermark .in {
  width: 20px;
  height: 20px;
  margin: 0 5px 0 1px;
  line-height: 18px;
  text-align: center;
  font-weight: bold;
  color: #4c4c4c;
  background: #d8d8d8;
}
```
